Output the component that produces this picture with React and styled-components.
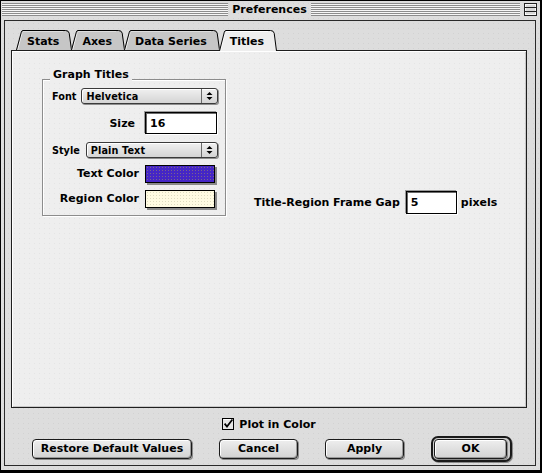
import React from "react";
import styled, { createGlobalStyle } from "styled-components";

const UI = `"DejaVu Sans", Verdana, sans-serif`;
const SM = `"DejaVu Sans", Verdana, sans-serif`;

const GlobalStyle = createGlobalStyle`
  html, body { margin: 0; padding: 0; background: #ffffff; }
  * { box-sizing: border-box; }
`;

const Window = styled.div`
  width: 542px;
  height: 473px;
  border: 1px solid #000;
  border-right-width: 2px;
  border-bottom-width: 3px;
  background-color: #dddddd;
  background-image: radial-gradient(rgba(0, 0, 0, 0.05) 0.6px, transparent 1px);
  background-size: 5px 5px;
  display: flex;
  flex-direction: column;
  font-family: ${UI};
  font-weight: 700;
  font-size: 11px;
  color: #000;
`;

const TitleBar = styled.div`
  height: 19px;
  flex: none;
  display: grid;
  grid-template-columns: 1fr auto 1fr;
  align-items: start;
  padding: 2px 3px 0 1px;
`;

const Stripes = styled.div`
  flex: 1;
  height: 13px;
  background: repeating-linear-gradient(to bottom, #8c8c8c 0 1px, #f6f6f6 1px 2px);
`;

const TitleText = styled.div`
  padding: 0 4px;
  line-height: 13px;
  font-size: 11px;
`;

const TitleRight = styled.div`
  display: flex;
  align-items: flex-start;
`;

const ShadeBox = styled.svg`
  flex: none;
  margin-left: 4px;
  display: block;
`;

const Frame = styled.div`
  flex: 1;
  margin: 0 4px 4px 3px;
  border: 1px solid #2a2a2a;
  display: flex;
  flex-direction: column;
  padding: 9px 8px 3px 6px;
`;

const TabRow = styled.div`
  display: flex;
  align-items: flex-start;
  height: 21px;
  margin-left: 5px;
  margin-bottom: -1px;
  position: relative;
  z-index: 1;
`;

const TabWrap = styled.div`
  display: flex;
  height: ${(p) => (p.$active ? 21 : 20)}px;
  position: relative;
  z-index: ${(p) => (p.$active ? 2 : 1)};
  & + & {
    margin-left: -1px;
  }
`;

const TabMid = styled.div`
  display: flex;
  align-items: center;
  height: 100%;
  padding: 1px 4px 0;
  border-top: 1px solid #000;
  background: ${(p) => (p.$active ? "#eeeeee" : "#c6c6c6")};
  box-shadow: inset 0 1px 0 ${(p) => (p.$active ? "#ffffff" : "#dedede")};
  white-space: nowrap;
  line-height: 1;
`;

const Edge = styled.svg`
  display: block;
  flex: none;
`;

const Panel = styled.div`
  height: 358px;
  flex: none;
  border: 1px solid #1e1e1e;
  background-color: #eeeeee;
  background-image: radial-gradient(rgba(0, 0, 0, 0.045) 0.6px, transparent 1px);
  background-size: 5px 5px;
  box-shadow: inset 1px 1px 0 #ffffff, inset -1px -1px 0 #c8c8c8;
  display: flex;
  align-items: flex-start;
  padding: 28px 0 0 30px;
`;

const GroupBox = styled.div`
  position: relative;
  width: 184px;
  height: 137px;
  flex: none;
  border: 1px solid #8c8c8c;
  box-shadow: 1px 1px 0 #ffffff, inset 1px 1px 0 #ffffff;
  padding: 8px 7px 0 9px;
  display: flex;
  flex-direction: column;
`;

const GroupLabel = styled.div`
  position: absolute;
  top: -12px;
  left: 7px;
  padding: 0 3px;
  background: #eeeeee;
  line-height: 14px;
`;

const Row = styled.div`
  display: flex;
  align-items: center;
  height: ${(p) => p.$h}px;
  margin-top: ${(p) => p.$mt || 0}px;
  justify-content: ${(p) => (p.$end ? "flex-end" : "flex-start")};
  gap: ${(p) => p.$gap || 0}px;
  flex: none;
`;

const SmallLabel = styled.span`
  font-family: ${SM};
  font-weight: 700;
  font-size: 9.7px;
  white-space: nowrap;
`;

const Label = styled.span`
  white-space: nowrap;
  line-height: 1;
`;

const Popup = styled.div`
  flex: 1;
  height: 16px;
  display: flex;
  align-items: stretch;
  border: 1px solid #3a3a3a;
  border-radius: 3px;
  background: linear-gradient(to bottom, #f0f0f0, #d4d4d4);
  box-shadow: 1px 1px 0 #8e8e8e, inset 1px 1px 0 #ffffff;
`;

const PopupText = styled.div`
  flex: 1;
  display: flex;
  align-items: center;
  padding-left: 4px;
  font-family: ${SM};
  font-weight: 700;
  font-size: 9.7px;
  letter-spacing: 0.1px;
  white-space: nowrap;
`;

const PopupArrow = styled.div`
  width: 16px;
  flex: none;
  border-left: 1px solid #6a6a6a;
  display: flex;
  align-items: center;
  justify-content: center;
`;

const TextField = styled.div`
  width: ${(p) => p.$w}px;
  height: ${(p) => p.$h}px;
  flex: none;
  background: #ffffff;
  border: 1px solid #000;
  box-shadow: inset 1px 1px 0 #6a6a6a, 1px 1px 0 #ffffff, -1px -1px 0 #9a9a9a;
  display: flex;
  align-items: center;
  padding-left: 4px;
  margin-left: ${(p) => p.$ml || 0}px;
  margin-right: ${(p) => p.$mr || 0}px;
`;

const Swatch = styled.div`
  width: 70px;
  height: 18px;
  flex: none;
  border: 1px solid #000;
  background-color: ${(p) => p.$c};
  background-image: radial-gradient(${(p) => p.$dot} 0.5px, transparent 0.9px);
  background-size: 3px 3px;
  box-shadow: 2px 2px 0 #8a8a8a;
  margin-right: 3px;
`;

const GapRow = styled.div`
  display: flex;
  align-items: center;
  margin-left: 28px;
  margin-top: 112px;
  height: 23px;
`;

const Unit = styled.span`
  white-space: nowrap;
  line-height: 1;
  margin-left: 4px;
`;

const CheckRow = styled.div`
  display: flex;
  align-items: center;
  justify-content: center;
  gap: 5px;
  height: 12px;
  margin-top: 10px;
  flex: none;
`;

const ButtonRow = styled.div`
  display: flex;
  align-items: center;
  height: 27px;
  margin-top: 5px;
  padding-left: 21px;
  gap: 27px;
  flex: none;
`;

const Button = styled.div`
  width: ${(p) => p.$w}px;
  height: 20px;
  flex: none;
  border: 1px solid #1a1a1a;
  border-radius: 4px;
  background: linear-gradient(to bottom, #eeeeee, #d2d2d2);
  box-shadow: inset 1px 1px 0 #ffffff, inset -1px -1px 0 #9a9a9a, 1px 1px 0 #8a8a8a;
  display: flex;
  align-items: center;
  justify-content: center;
  white-space: nowrap;
  line-height: 1;
`;

const DefaultRing = styled.div`
  width: 81px;
  height: 26px;
  flex: none;
  border: 2px solid #1a1a1a;
  border-radius: 7px;
  padding: 1px;
  background: #cdcdcd;
  box-shadow: 1px 1px 0 #8a8a8a;
  display: flex;
`;

function LeftEdge({ h, fill }) {
  return (
    <Edge width="7" height={h} viewBox={`0 0 7 ${h}`}>
      <path d={`M0 ${h} L5.2 1.6 Q5.7 0 7 0 L7 ${h} Z`} fill={fill} />
      <path d={`M1.6 ${h} L6.1 2.6`} stroke="#ffffff" strokeOpacity="0.7" fill="none" />
      <path d={`M0.5 ${h} L5.3 2.2 Q5.8 0.5 7 0.5`} stroke="#000" fill="none" />
    </Edge>
  );
}

function RightEdge({ h, fill }) {
  return (
    <Edge width="9" height={h} viewBox={`0 0 9 ${h}`}>
      <path d={`M0 0 L2.5 0 Q6 0 6.6 3 L9 ${h} L0 ${h} Z`} fill={fill} />
      <path d={`M0 0.5 L2.5 0.5 Q5.6 0.5 6.2 3.2 L8.5 ${h}`} stroke="#000" fill="none" />
    </Edge>
  );
}

function Tab({ label, active }) {
  const h = active ? 21 : 20;
  const fill = active ? "#eeeeee" : "#c6c6c6";
  return (
    <TabWrap $active={active}>
      <LeftEdge h={h} fill={fill} />
      <TabMid $active={active}>{label}</TabMid>
      <RightEdge h={h} fill={fill} />
    </TabWrap>
  );
}

function UpDown() {
  return (
    <svg width="7" height="10" viewBox="0 0 7 10">
      <path d="M0.5 4 L3.5 1 L6.5 4 Z" fill="#000" />
      <path d="M0.5 6 L3.5 9 L6.5 6 Z" fill="#000" />
    </svg>
  );
}

function CheckBox() {
  return (
    <svg width="12" height="12" viewBox="0 0 12 12" style={{ display: "block" }}>
      <rect x="0.5" y="0.5" width="11" height="11" fill="#e4e4e4" stroke="#000" />
      <path d="M1.5 1.5 H10.5" stroke="#ffffff" />
      <path d="M2.6 5.6 L5 8.6 L10.4 1.6" stroke="#000" strokeWidth="1.7" fill="none" />
    </svg>
  );
}

export default function App() {
  const tabs = ["Stats", "Axes", "Data Series", "Titles"];
  return (
    <>
      <GlobalStyle />
      <Window>
        <TitleBar>
          <Stripes />
          <TitleText>Preferences</TitleText>
          <TitleRight>
            <Stripes />
            <ShadeBox width="13" height="13" viewBox="0 0 13 13">
              <rect x="0.5" y="0.5" width="12" height="12" fill="#d8d8d8" stroke="#222" />
              <rect x="1.5" y="1.5" width="10" height="10" fill="none" stroke="#ffffff" strokeOpacity="0.8" />
              <path d="M1 4.5 H12 M1 8.5 H12" stroke="#222" />
            </ShadeBox>
          </TitleRight>
        </TitleBar>
        <Frame>
          <TabRow>
            {tabs.map((t) => (
              <Tab key={t} label={t} active={t === "Titles"} />
            ))}
          </TabRow>
          <Panel>
            <GroupBox>
              <GroupLabel>Graph Titles</GroupLabel>
              <Row $h={16} $gap={5}>
                <SmallLabel>Font</SmallLabel>
                <Popup>
                  <PopupText>Helvetica</PopupText>
                  <PopupArrow>
                    <UpDown />
                  </PopupArrow>
                </Popup>
              </Row>
              <Row $h={22} $mt={8} $end $gap={10}>
                <Label>Size</Label>
                <TextField $w={72} $h={22} $mr={1}>
                  16
                </TextField>
              </Row>
              <Row $h={16} $mt={8} $gap={6}>
                <SmallLabel>Style</SmallLabel>
                <Popup>
                  <PopupText>Plain Text</PopupText>
                  <PopupArrow>
                    <UpDown />
                  </PopupArrow>
                </Popup>
              </Row>
              <Row $h={19} $mt={6} $end $gap={6}>
                <Label>Text Color</Label>
                <Swatch $c="#4526c6" $dot="rgba(170,150,90,0.55)" />
              </Row>
              <Row $h={19} $mt={6} $end $gap={6}>
                <Label>Region Color</Label>
                <Swatch $c="#fffbe2" $dot="rgba(200,200,170,0.6)" />
              </Row>
            </GroupBox>
            <GapRow>
              <Label>Title-Region Frame Gap</Label>
              <TextField $w={51} $h={23} $ml={6}>
                5
              </TextField>
              <Unit>pixels</Unit>
            </GapRow>
          </Panel>
          <CheckRow>
            <CheckBox />
            <Label>Plot in Color</Label>
          </CheckRow>
          <ButtonRow>
            <Button $w={160}>Restore Default Values</Button>
            <Button $w={79}>Cancel</Button>
            <Button $w={79}>Apply</Button>
            <DefaultRing>
              <Button $w={73}>OK</Button>
            </DefaultRing>
          </ButtonRow>
        </Frame>
      </Window>
    </>
  );
}
